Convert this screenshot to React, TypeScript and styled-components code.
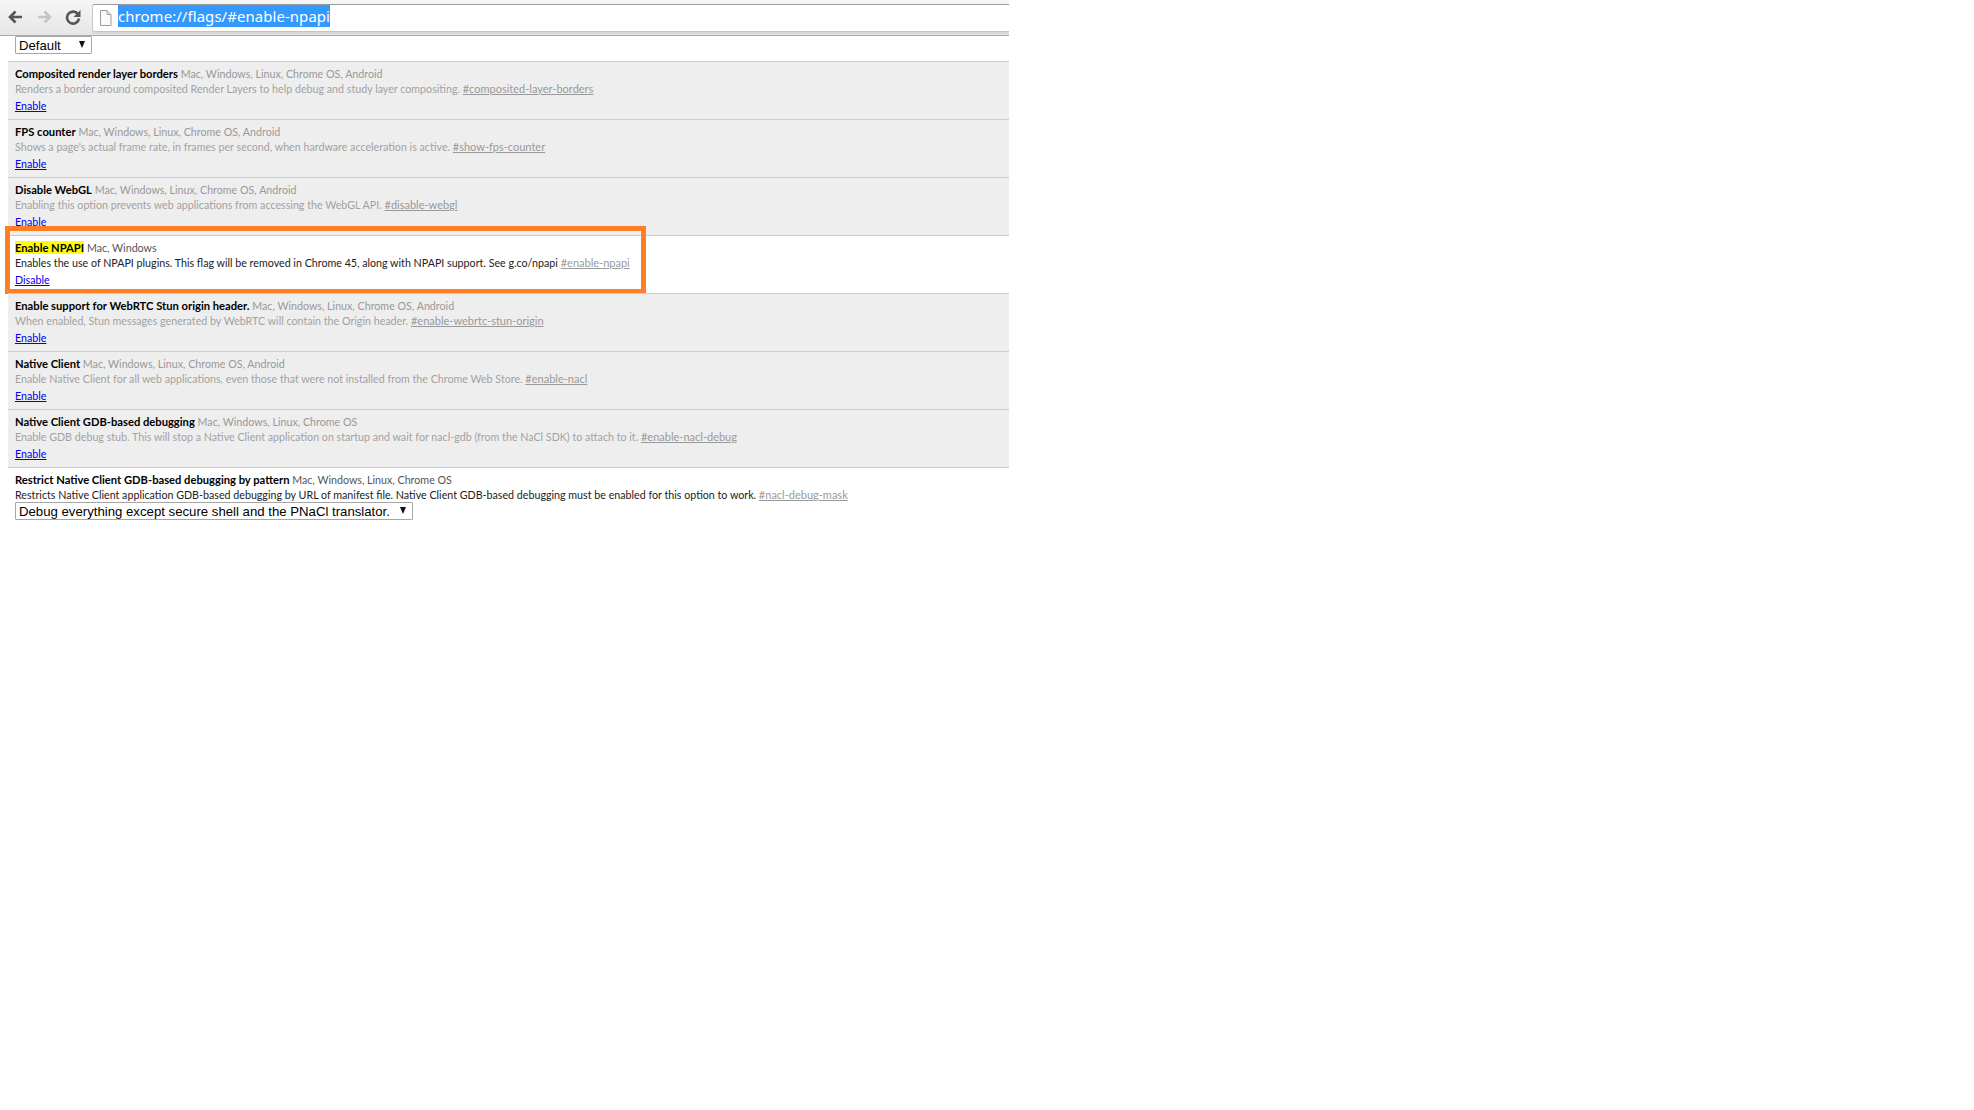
import React from 'react';
import styled, { createGlobalStyle } from 'styled-components';

const GlobalStyle = createGlobalStyle`
  html, body {
    margin: 0;
    padding: 0;
    background: #fff;
    font-family: Lato, "Noto Sans", sans-serif;
  }
`;

const Page = styled.div`
  width: 1009px;
`;

const Toolbar = styled.div`
  display: flex;
  align-items: flex-start;
  height: 35px;
  border-bottom: 1px solid #a9a9a9;
  background: linear-gradient(#f6f6f6, #e6e6e6);
`;

const NavButton = styled.div<{ $gap: number }>`
  display: flex;
  width: 16px;
  height: 16px;
  margin-top: 9px;
  margin-left: ${(props) => props.$gap}px;
`;

const Omnibox = styled.div`
  display: flex;
  align-items: center;
  flex: 1;
  height: 26px;
  margin-top: 4px;
  margin-left: 11px;
  padding-left: 6px;
  background: #fff;
  border-top: 1px solid #9a9a9a;
  border-left: 1px solid #c8c8c8;
  border-bottom: 1px solid #c4c4c4;
  border-top-left-radius: 3px;
  border-bottom-left-radius: 3px;
  box-shadow: 0 2px 0 #d8d8d8;
`;

const PageIcon = styled.svg`
  width: 13px;
  height: 16px;
  margin-right: 6px;
  flex: none;
`;

const Url = styled.span`
  display: block;
  height: 22px;
  margin-top: -4px;
  background: #3399ff;
  color: #fff;
  font-family: "Noto Sans", sans-serif;
  font-size: 14.9px;
  line-height: 22px;
  letter-spacing: 0.1px;
`;

const TopControl = styled.div`
  height: 25px;
  padding-left: 15px;
`;

const Select = styled.div<{ $width: number }>`
  box-sizing: border-box;
  display: flex;
  align-items: center;
  justify-content: space-between;
  width: ${(props) => props.$width}px;
  height: 18px;
  padding: 0 6px 0 3px;
  background: #fff;
  border: 1px solid #a6a6a6;
  border-radius: 1px;
  color: #000;
  font-family: "Liberation Sans", sans-serif;
  font-size: 13.2px;
  white-space: nowrap;
`;

const Arrow = styled.span`
  width: 0;
  height: 0;
  margin-bottom: 2px;
  border-left: 3.5px solid transparent;
  border-right: 3.5px solid transparent;
  border-top: 7px solid #111;
`;

const List = styled.div`
  margin-left: 8px;
`;

const Row = styled.div<{ $bright?: boolean }>`
  position: relative;
  box-sizing: border-box;
  height: 58px;
  padding: 4px 7px 0;
  background: ${(props) => (props.$bright ? '#fff' : '#eee')};
  border-top: 1px solid #ccc;
  font-size: 10.7px;
  line-height: 15px;
  white-space: nowrap;
`;

const Name = styled.span`
  color: #000;
  font-size: 11.2px;
  font-weight: 700;
`;

const Marked = styled.span`
  background: #ffff00;
`;

const Platforms = styled.span<{ $bright?: boolean }>`
  color: ${(props) => (props.$bright ? '#555' : '#999')};
`;

const Description = styled.div<{ $bright?: boolean }>`
  color: ${(props) => (props.$bright ? '#222' : '#a2a2a2')};
`;

const Tag = styled.a`
  color: #999;
  font-size: 11px;
  text-decoration: underline;
`;

const Action = styled.a`
  display: block;
  margin-top: 2px;
  color: #0000ee;
  text-decoration: underline;
`;

const Callout = styled.div`
  position: absolute;
  box-sizing: border-box;
  left: -3px;
  top: -10px;
  width: 641px;
  height: 68px;
  border: 5px solid #ff7f27;
  pointer-events: none;
`;

const flags = [
  {
    name: 'Composited render layer borders',
    platforms: 'Mac, Windows, Linux, Chrome OS, Android',
    text: 'Renders a border around composited Render Layers to help debug and study layer compositing.',
    tag: '#composited-layer-borders',
  },
  {
    name: 'FPS counter',
    platforms: 'Mac, Windows, Linux, Chrome OS, Android',
    text: "Shows a page's actual frame rate, in frames per second, when hardware acceleration is active.",
    tag: '#show-fps-counter',
  },
  {
    name: 'Disable WebGL',
    platforms: 'Mac, Windows, Linux, Chrome OS, Android',
    text: 'Enabling this option prevents web applications from accessing the WebGL API.',
    tag: '#disable-webgl',
  },
  {
    name: 'Enable NPAPI',
    platforms: 'Mac, Windows',
    text: 'Enables the use of NPAPI plugins. This flag will be removed in Chrome 45, along with NPAPI support. See g.co/npapi',
    tag: '#enable-npapi',
    active: true,
  },
  {
    name: 'Enable support for WebRTC Stun origin header.',
    platforms: 'Mac, Windows, Linux, Chrome OS, Android',
    text: 'When enabled, Stun messages generated by WebRTC will contain the Origin header.',
    tag: '#enable-webrtc-stun-origin',
  },
  {
    name: 'Native Client',
    platforms: 'Mac, Windows, Linux, Chrome OS, Android',
    text: 'Enable Native Client for all web applications, even those that were not installed from the Chrome Web Store.',
    tag: '#enable-nacl',
  },
  {
    name: 'Native Client GDB-based debugging',
    platforms: 'Mac, Windows, Linux, Chrome OS',
    text: 'Enable GDB debug stub. This will stop a Native Client application on startup and wait for nacl-gdb (from the NaCl SDK) to attach to it.',
    tag: '#enable-nacl-debug',
  },
];

const App = () => (
  <Page>
    <GlobalStyle />
    <Toolbar>
      <NavButton $gap={7}>
        <svg width="16" height="16" viewBox="0 0 16 16" fill="none" stroke="#555" strokeWidth="2.6">
          <path d="M15 8H3M8.5 2.5L3 8l5.5 5.5" />
        </svg>
      </NavButton>
      <NavButton $gap={14}>
        <svg width="16" height="16" viewBox="0 0 16 16" fill="none" stroke="#c4c4c4" strokeWidth="2.6">
          <path d="M1 8h12M7.5 2.5L13 8l-5.5 5.5" />
        </svg>
      </NavButton>
      <NavButton $gap={12}>
        <svg width="16" height="16" viewBox="0 0 16 16" fill="none">
          <path d="M13 5.2A6 6 0 1 0 14 9.5" stroke="#555" strokeWidth="2.6" />
          <path d="M15.5 1v7h-7z" fill="#555" />
        </svg>
      </NavButton>
      <Omnibox>
        <PageIcon viewBox="0 0 13 16" fill="#fafafa" stroke="#9c9c9c">
          <path d="M1.500.5h6.500l4 4v11h-10.500z" />
          <path d="M8 .5v4h4" fill="none" />
        </PageIcon>
        <Url>chrome://flags/#enable-npapi</Url>
      </Omnibox>
    </Toolbar>
    <TopControl>
      <Select $width={77}>
        Default
        <Arrow />
      </Select>
    </TopControl>
    <List>
      {flags.map((flag) => (
        <Row key={flag.tag} $bright={flag.active}>
          <div>
            <Name>{flag.active ? <Marked>{flag.name}</Marked> : flag.name}</Name>{' '}
            <Platforms $bright={flag.active}>{flag.platforms}</Platforms>
          </div>
          <Description $bright={flag.active}>
            {flag.text} <Tag>{flag.tag}</Tag>
          </Description>
          <Action>{flag.active ? 'Disable' : 'Enable'}</Action>
          {flag.active && <Callout />}
        </Row>
      ))}
      <Row $bright>
        <div>
          <Name>Restrict Native Client GDB-based debugging by pattern</Name>{' '}
          <Platforms $bright>Mac, Windows, Linux, Chrome OS</Platforms>
        </div>
        <Description $bright>
          Restricts Native Client application GDB-based debugging by URL of manifest file. Native Client GDB-based debugging must be enabled for this option to work.{' '}
          <Tag>#nacl-debug-mask</Tag>
        </Description>
        <Select $width={398}>
          Debug everything except secure shell and the PNaCl translator.
          <Arrow />
        </Select>
      </Row>
    </List>
  </Page>
);

export default App;
